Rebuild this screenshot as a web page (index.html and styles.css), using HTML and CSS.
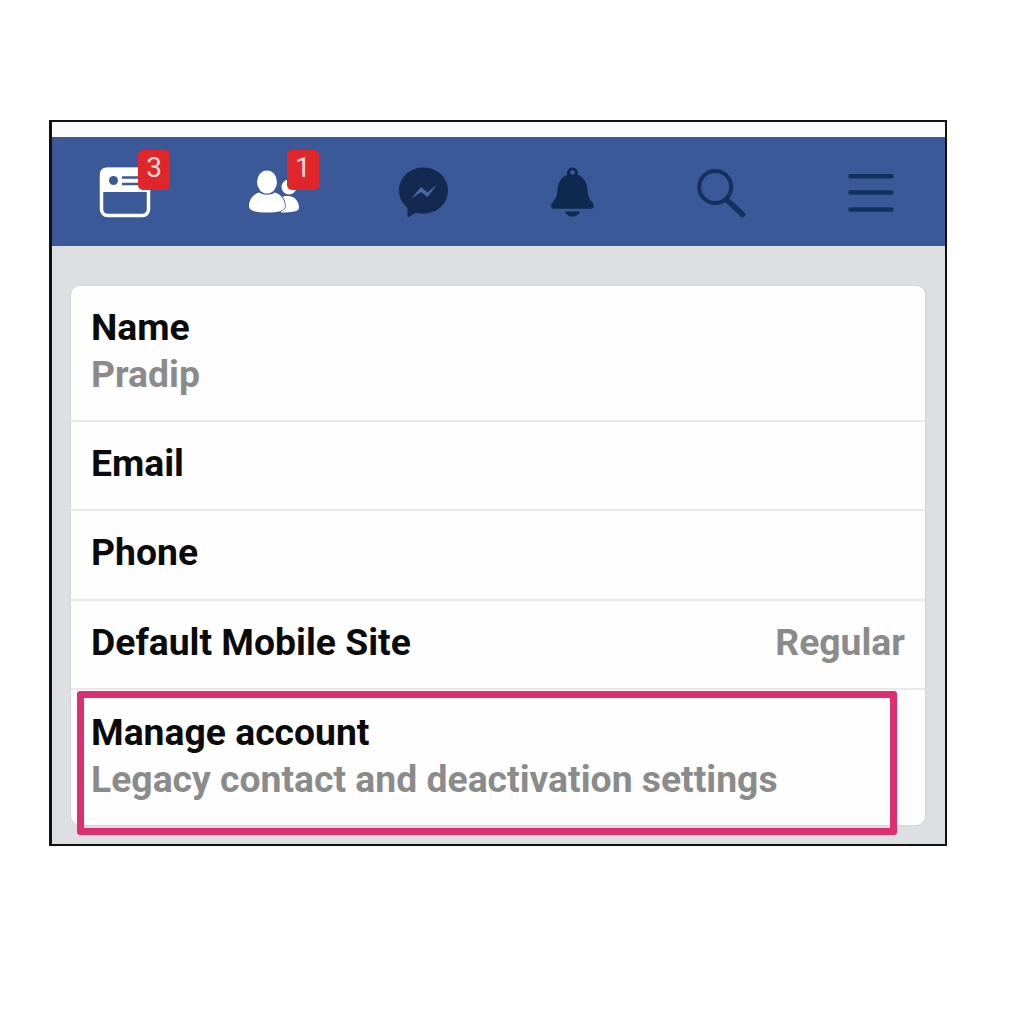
FILE: index.html
```html
<!DOCTYPE html>
<html lang="en">
<head>
  <meta charset="UTF-8">
  <title>Settings</title>
  <link rel="stylesheet" href="styles.css">
</head>
<body>
  <div class="frame">
    <div class="status-strip"></div>

    <nav class="top-nav">
      <div class="nav-item">
        <svg class="nav-icon" viewBox="0 0 60 60">
          <rect x="5.500" y="7.500" width="47" height="46" rx="6" fill="none" stroke="#fff" stroke-width="3.500"/>
          <path d="M10 5.500h38a6 6 0 0 1 6 6V30H4V11.500a6 6 0 0 1 6-6z" fill="#fff"/>
          <circle cx="17.500" cy="18.500" r="4.500" fill="#3b5998"/>
          <path d="M26 15.500h16M26 22h16" stroke="#3b5998" stroke-width="2.500"/>
        </svg>
        <span class="badge">3</span>
      </div>
      <div class="nav-item">
        <svg class="nav-icon" viewBox="0 0 60 60">
          <circle cx="44" cy="25" r="7.500" fill="#fff"/>
          <path d="M36 50.500V35c2-.5 4-1 7-1 7 0 11 6 11 12 0 3-6 4.500-18 4.500z" fill="#fff"/>
          <ellipse cx="22" cy="20" rx="10" ry="11.500" fill="#fff"/>
          <path d="M4 44c0-7 5-12 10-13.500 5 3 11 3 16 0C35 32 40 37 40 44c0 5-7 6.500-18 6.500S4 49 4 44z" fill="#fff" stroke="#3b5998" stroke-width="1.500" paint-order="stroke"/>
        </svg>
        <span class="badge">1</span>
      </div>
      <div class="nav-item">
        <svg class="nav-icon" viewBox="0 0 60 60">
          <path d="M29.500 5.500C16 5.500 5 15.500 5 28.500c0 7 3.300 13 8.500 17.200v10l8.500-5c2.400.6 5 .9 7.500.9C43 51.600 54 41.600 54 28.500S43 5.500 29.500 5.500z" fill="#14294f"/>
          <path d="M17 37l10-12 6.500 5.500L43 22.500 33.500 35l-6.500-5z" fill="#4d6aa0"/>
        </svg>
      </div>
      <div class="nav-item">
        <svg class="nav-icon" viewBox="0 0 60 60">
          <path d="M29.500 5.500a5.500 5.500 0 0 0-5.300 7.200C17 15.500 14.800 22 14.300 30c-.4 5.500-2.700 8-5 10.700-2.200 2.600-1.200 6 2 6h36.400c3.200 0 4.200-3.400 2-6-2.300-2.700-4.600-5.200-5-10.700-.5-8-2.700-14.500-9.900-17.300a5.500 5.500 0 0 0-5.300-7.200z" fill="#10294f"/>
          <path d="M22 49.500h15c-1 3.500-4.300 5-7.500 5s-6.500-1.500-7.500-5z" fill="#10294f"/>
          <circle cx="29.500" cy="10.500" r="2.200" fill="#3f5c94"/>
        </svg>
      </div>
      <div class="nav-item">
        <svg class="nav-icon" viewBox="0 0 60 60">
          <circle cx="23.200" cy="25" r="16" fill="none" stroke="#14305f" stroke-width="4"/>
          <path d="M35 38l15.500 14.500" stroke="#14305f" stroke-width="5.500" stroke-linecap="round"/>
        </svg>
      </div>
      <div class="nav-item">
        <svg class="nav-icon" viewBox="0 0 60 60">
          <path d="M9.500 14.200h41M9.500 30.500h41M9.500 47.500h41" stroke="#14305f" stroke-width="4.500" stroke-linecap="round"/>
        </svg>
      </div>
    </nav>

    <div class="content">
      <div class="card">
        <div class="row row-tall">
          <div class="row-title">Name</div>
          <div class="row-sub">Pradip</div>
        </div>
        <div class="row">
          <div class="row-title">Email</div>
        </div>
        <div class="row">
          <div class="row-title">Phone</div>
        </div>
        <div class="row row-split">
          <div class="row-title">Default Mobile Site</div>
          <div class="row-sub">Regular</div>
        </div>
        <div class="row row-tall row-last">
          <div class="row-title">Manage account</div>
          <div class="row-sub">Legacy contact and deactivation settings</div>
        </div>
      </div>
      <div class="highlight"></div>
    </div>
  </div>
</body>
</html>
```

FILE: styles.css
```css
* {
  box-sizing: border-box;
  margin: 0;
  padding: 0;
}

body {
  background: white;
  font-family: Roboto, 'Liberation Sans', sans-serif;
}

.frame {
  width: 898px;
  height: 726px;
  margin: 120px 0 0 49px;
  border: 2px solid #111;
  border-left-width: 3px;
  display: flex;
  flex-direction: column;
  background: #dddfe3;
}

.status-strip {
  height: 15px;
  background: #fbfcfb;
}

.top-nav {
  height: 109px;
  background: #3b5998;
  display: flex;
}

.nav-item {
  flex: 1;
  display: flex;
  align-items: center;
  justify-content: center;
  position: relative;
}

.nav-icon {
  width: 60px;
  height: 60px;
}

.badge {
  position: absolute;
  left: 86px;
  top: 13px;
  width: 32px;
  height: 40px;
  background: #e0262a;
  border-radius: 5px;
  color: #f6dcd8;
  font-size: 28px;
  line-height: 36px;
  text-align: center;
}

.content {
  flex: 1;
  position: relative;
  padding: 39px 19px 0 18px;
}

.card {
  height: 541px;
  background: #fefefe;
  border: 1px solid #d3d4d8;
  border-radius: 10px;
  display: flex;
  flex-direction: column;
}

.row {
  height: 89.300px;
  padding: 0 20px 4px;
  border-bottom: 2px solid #e8e9eb;
  display: flex;
  flex-direction: column;
  justify-content: center;
}

.row-tall {
  height: 136px;
  padding-bottom: 4px;
}

.row-split {
  flex-direction: row;
  justify-content: space-between;
  align-items: center;
}

.row-last {
  flex: 1;
  border-bottom: none;
  padding-bottom: 2px;
}

.row-title {
  color: #0b0b0b;
  font-size: 37.300px;
  line-height: 47px;
  font-weight: 700;
}

.row-sub {
  color: #8b8b8b;
  font-size: 37.300px;
  line-height: 47px;
  font-weight: 700;
}

.highlight {
  position: absolute;
  left: 25px;
  top: 445px;
  width: 820px;
  height: 144px;
  border: 7px solid #dc2f72;
  border-radius: 3px;
}
```
